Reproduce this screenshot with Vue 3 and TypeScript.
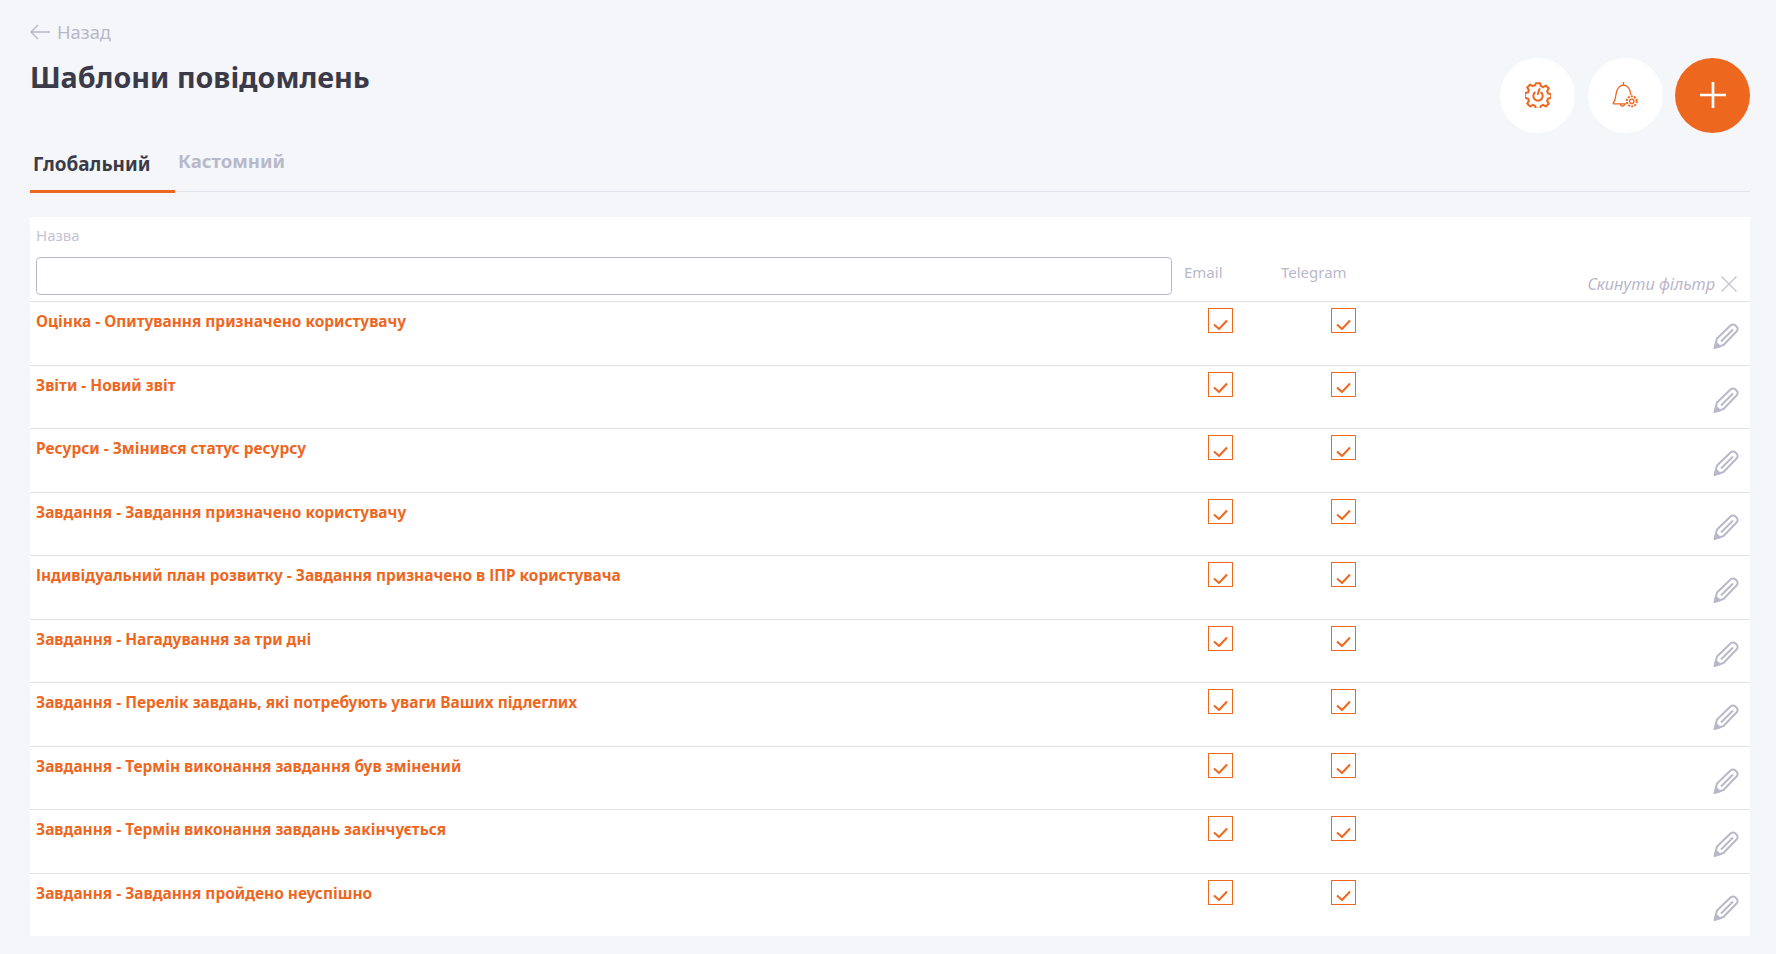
<script setup lang="ts">
const rows: string[] = [
  'Оцінка - Опитування призначено користувачу',
  'Звіти - Новий звіт',
  'Ресурси - Змінився статус ресурсу',
  'Завдання - Завдання призначено користувачу',
  'Індивідуальний план розвитку - Завдання призначено в ІПР користувача',
  'Завдання - Нагадування за три дні',
  'Завдання - Перелік завдань, які потребують уваги Ваших підлеглих',
  'Завдання - Термін виконання завдання був змінений',
  'Завдання - Термін виконання завдань закінчується',
  'Завдання - Завдання пройдено неуспішно',
]
</script>

<template>
  <div class="page">
    <header class="top">
      <div class="heading">
        <a class="back">
          <svg width="20" height="16" viewBox="0 0 20 16" fill="none" stroke="#b9b8cb" stroke-width="1.5">
            <path d="M20 8H1M8 1 1 8l7 7" />
          </svg>
          <span>Назад</span>
        </a>
        <h1>Шаблони повідомлень</h1>
      </div>
      <div class="actions">
        <button class="round">
          <svg class="nudge" width="26" height="26" viewBox="0 0 26 26" fill="none" stroke="#ee671f" stroke-width="2" stroke-linejoin="round">
            <path d="M10.800 1.200h4.400l.6 3 2.400 1 2.600-1.700 3 3-1.700 2.600 1 2.400 3 .6v3.800l-3 .6-1 2.400 1.700 2.600-3 3-2.600-1.700-2.400 1-.6 3h-4.400l-.6-3-2.400-1-2.600 1.700-3-3 1.700-2.600-1-2.400-3-.6V11.100l3-.6 1-2.400-1.700-2.600 3-3 2.600 1.700 2.400-1z" />
            <path d="M9.800 10.500a4.700 4.700 0 1 0 6.400 0" stroke-linecap="round" />
            <path d="M14.500 7 12.800 12" stroke-linecap="round" />
          </svg>
        </button>
        <button class="round">
          <svg class="nudge" width="26" height="26" viewBox="0 0 26 26" fill="none" stroke="#ee671f" stroke-width="1.300">
            <path d="M11.500 0v3M1 21.800c0-1.300 1.500-2 2-4.300l1.300-6.500C5 6.500 8 3 11.500 3s6.500 3.500 7 8l.3 2M1 21.800h13" />
            <path d="M8.500 22c0 2.800 4 2.800 4 0" />
            <circle cx="19.800" cy="19.300" r="2.200" />
            <circle cx="19.800" cy="19.300" r="5" stroke-width="2" stroke-dasharray="2 1.140" />
          </svg>
        </button>
        <button class="round primary">
          <svg class="nudge" width="26" height="26" viewBox="0 0 26 26" stroke="#fff" stroke-width="2.700">
            <path d="M13 0v26M0 13h26" />
          </svg>
        </button>
      </div>
    </header>

    <nav class="tabs">
      <span class="tab active">Глобальний</span>
      <span class="tab">Кастомний</span>
    </nav>

    <section class="card">
      <div class="head">
        <div class="name-filter">
          <label>Назва</label>
          <input type="text" />
        </div>
        <span class="col-label">Email</span>
        <span class="col-label tg">Telegram</span>
        <span class="reset">
          <em>Скинути фільтр</em>
          <svg width="16" height="16" viewBox="0 0 16 16" stroke="#c5c4d3" stroke-width="1.400">
            <path d="m.5.500 15 15M15.500.500l-15 15" />
          </svg>
        </span>
      </div>
      <div v-for="row in rows" :key="row" class="row">
        <span class="title">{{ row }}</span>
        <span v-for="c in 2" :key="c" class="check-cell">
          <span class="check">
            <svg width="15" height="11" viewBox="0 0 15 11" fill="none" stroke="#ee671f" stroke-width="2">
              <path d="M1 5.500 6 10 14 1.500" />
            </svg>
          </span>
        </span>
        <span class="edit">
          <svg width="26" height="26" viewBox="0 0 26 26" fill="none" stroke="#b9b8cb" stroke-width="2" stroke-linejoin="round">
            <path d="M1.500 25 4 15.500 17.500 2.500a3.400 3.400 0 0 1 5 0l1 1a3.400 3.400 0 0 1 0 5L10.500 22z" />
            <path d="M20 6.500 8 18.500" />
            <path d="M2 24.500l1.200-4.500 3.500 3.300z" fill="#b9b8cb" />
          </svg>
        </span>
      </div>
    </section>
  </div>
</template>

<style>
html,
body {
  background: #f4f6fa;
}
</style>

<style scoped>
.page {
  box-sizing: border-box;
  height: 954px;
  padding: 20px 26px 18px 30px;
  background: #f4f6fa;
  font-family: 'Noto Sans', 'Open Sans', sans-serif;
  overflow: hidden;
}
.top {
  display: flex;
  justify-content: space-between;
  align-items: flex-start;
  height: 114px;
}
.back {
  display: flex;
  align-items: center;
  gap: 7px;
  height: 24px;
  color: #b9b8cb;
  font-size: 18.300px;
  line-height: 24px;
}
h1 {
  margin: 13px 0 0;
  color: #3b3a48;
  font-size: 28.700px;
  line-height: 40px;
  font-weight: 700;
}
.actions {
  display: flex;
  gap: 12.500px;
  padding-top: 38px;
}
.round {
  display: flex;
  align-items: center;
  justify-content: center;
  width: 75px;
  height: 75px;
  padding: 0;
  border: 0;
  border-radius: 50%;
  background: #fff;
}
.nudge {
  margin-top: -1px;
}
.primary {
  background: #ee671f;
}
.tabs {
  display: flex;
  align-items: flex-start;
  height: 58px;
  box-sizing: border-box;
  border-bottom: 1px solid #e2e2ec;
}
.tab {
  color: #b9b8cb;
  font-size: 18.600px;
  line-height: 24px;
  font-weight: 700;
  margin-top: 15px;
}
.tab.active {
  box-sizing: border-box;
  width: 145px;
  height: 41px;
  margin: 18px 3px -2px 0;
  padding-left: 3px;
  color: #3b3a48;
  font-size: 18.900px;
  border-bottom: 3px solid #ee671f;
}
.card {
  margin-top: 25px;
  background: #fff;
}
.head {
  display: flex;
  height: 84px;
  box-sizing: border-box;
  padding-left: 6px;
  position: relative;
}
.name-filter {
  display: flex;
  flex-direction: column;
  width: 1136px;
}
.name-filter label {
  margin-top: 8px;
  color: #c5c4d3;
  font-size: 15px;
  line-height: 20px;
}
.name-filter input {
  box-sizing: border-box;
  width: 1136px;
  height: 38px;
  margin-top: 12px;
  border: 1px solid #b9b8cb;
  border-radius: 4px;
  background: #fff;
}
.col-label {
  margin: 45px 0 0 12px;
  width: 85px;
  color: #b9b8cb;
  font-size: 15px;
  line-height: 20px;
}
.col-label.tg {
  width: auto;
}
.reset {
  position: absolute;
  right: 13px;
  top: 57px;
  display: flex;
  align-items: center;
  gap: 6px;
  color: #b9b8cb;
  font-size: 16.300px;
  line-height: 20px;
}
.row {
  box-sizing: border-box;
  display: flex;
  height: 63.500px;
  padding-left: 6px;
  border-top: 1px solid #e2e2ec;
}
.title {
  width: 1136px;
  margin-top: 7px;
  color: #ee671f;
  font-size: 15.450px;
  line-height: 24px;
  font-weight: 700;
}
.check-cell {
  width: 123px;
  padding: 6px 0 0 36px;
  box-sizing: border-box;
}
.check {
  box-sizing: border-box;
  display: flex;
  align-items: center;
  justify-content: center;
  width: 25px;
  height: 25px;
  padding-top: 7px;
  border: 1px solid #ee671f;
}
.edit {
  margin: 21px 11px 0 auto;
  height: 26px;
}
</style>
